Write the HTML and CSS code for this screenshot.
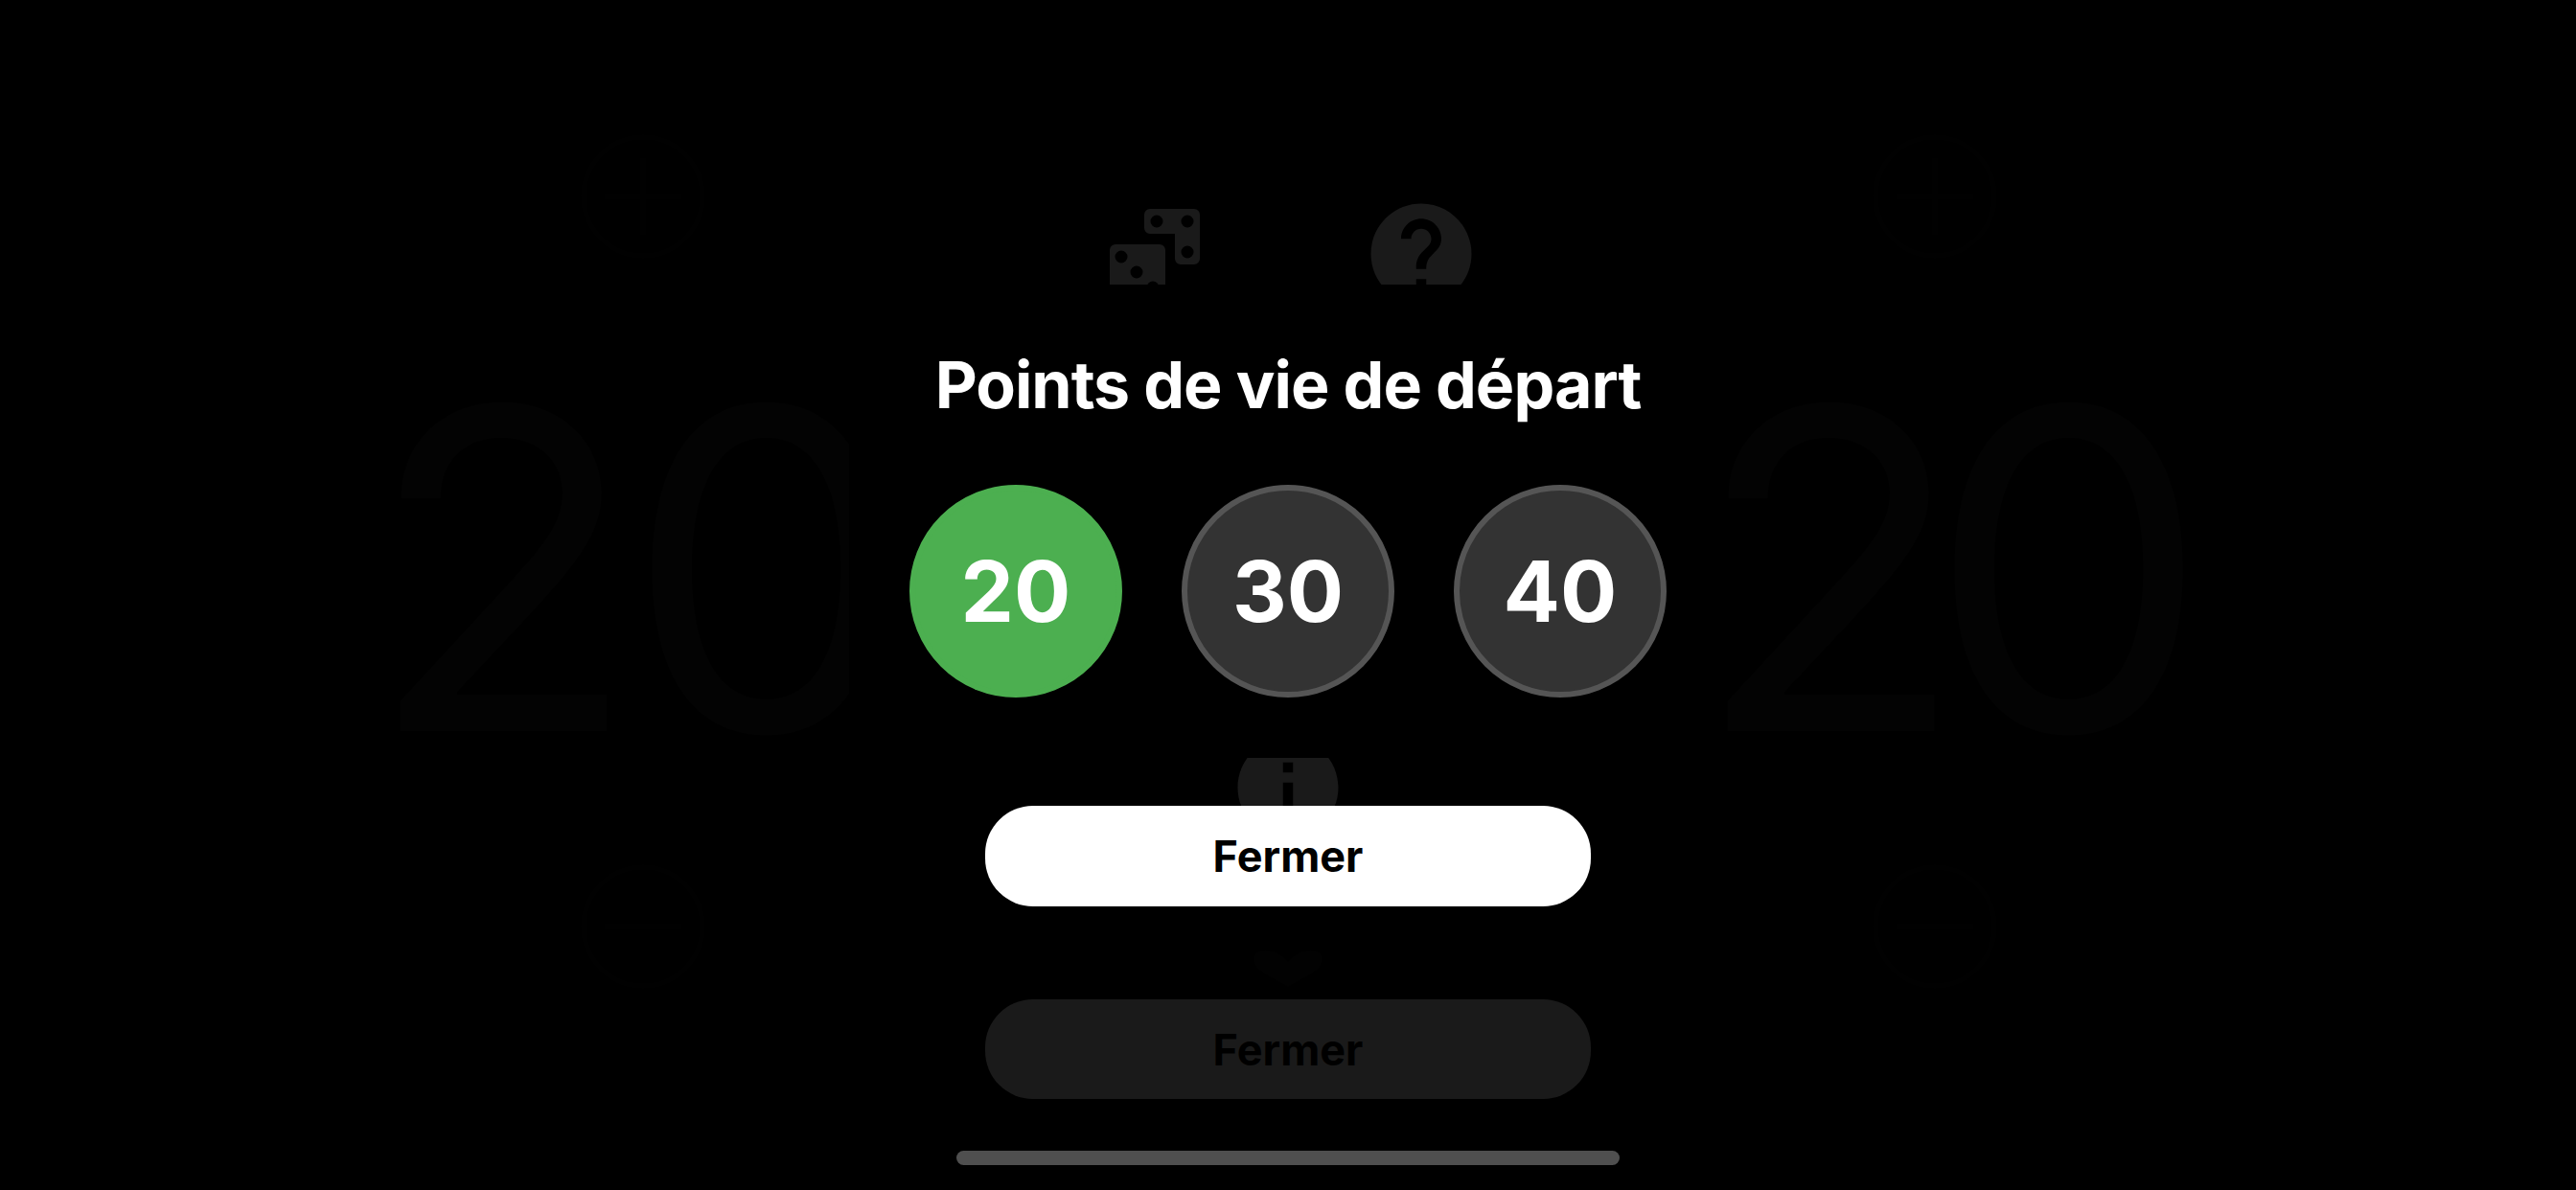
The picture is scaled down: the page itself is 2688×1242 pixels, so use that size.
FILE: index.html
```html
<!DOCTYPE html>
<html lang="fr">
<head>
<meta charset="utf-8">
<title>Points de vie de départ</title>
<link rel="stylesheet" href="styles.css">
</head>
<body>
<div class="screen">
  <div class="game">
    <section class="player player-start">
      <svg class="step" viewBox="0 0 130 130"><circle cx="65" cy="65" r="62"/><path d="M65 25v80M25 65h80"/></svg>
      <div class="life">20</div>
      <svg class="step step-minus" viewBox="0 0 130 130"><circle cx="65" cy="65" r="62"/><path d="M25 65h80"/></svg>
    </section>
    <section class="controls">
      <div class="tools">
        <svg class="icon" viewBox="0 0 126 126"><path fill-rule="evenodd" d="M58 16h46a6 6 0 0 1 6 6v46a6 6 0 0 1-6 6H90a6 6 0 0 1-6-6V42H58a6 6 0 0 1-6-6V22a6 6 0 0 1 6-6zM65 22.500a6.500 6.500 0 1 0 0 13a6.500 6.500 0 1 0 0-13zM97 22.500a6.500 6.500 0 1 0 0 13a6.500 6.500 0 1 0 0-13zM97 54.500a6.500 6.500 0 1 0 0 13a6.500 6.500 0 1 0 0-13z"/><path fill-rule="evenodd" d="M22 53h46a6 6 0 0 1 6 6v46a6 6 0 0 1-6 6H22a6 6 0 0 1-6-6V59a6 6 0 0 1 6-6zM28 59.500a6.500 6.500 0 1 0 0 13a6.500 6.500 0 1 0 0-13zM44 75.500a6.500 6.500 0 1 0 0 13a6.500 6.500 0 1 0 0-13zM61 91.500a6.500 6.500 0 1 0 0 13a6.500 6.500 0 1 0 0-13z"/></svg>
        <svg class="icon" viewBox="0 0 24 24"><path d="M12 2C6.480 2 2 6.480 2 12s4.480 10 10 10 10-4.480 10-10S17.520 2 12 2zm1 17h-2v-2h2v2zm2.070-7.750l-.9.920C13.450 12.900 13 13.500 13 15h-2v-.5c0-1.100.45-2.100 1.170-2.830l1.240-1.260c.37-.36.59-.86.59-1.410 0-1.100-.9-2-2-2s-2 .9-2 2H8c0-2.210 1.790-4 4-4s4 1.790 4 4c0 .88-.36 1.680-.93 2.250z"/></svg>
      </div>
      <svg class="icon info" viewBox="0 0 24 24"><path d="M12 2C6.480 2 2 6.480 2 12s4.480 10 10 10 10-4.480 10-10S17.520 2 12 2zm1 15h-2v-6h2v6zm0-8h-2V7h2v2z"/></svg>
      <svg class="heart" viewBox="0 0 76 42"><path d="M38 40C22 30 2 24 2 11C2 5 7 2 14 2c10 0 18 4 24 12C44 6 52 2 62 2c7 0 12 3 12 9C74 24 54 30 38 40z"/></svg>
      <div class="ghost-button">Fermer</div>
    </section>
    <section class="player player-end">
      <svg class="step" viewBox="0 0 130 130"><circle cx="65" cy="65" r="62"/><path d="M65 25v80M25 65h80"/></svg>
      <div class="life">20</div>
      <svg class="step step-minus" viewBox="0 0 130 130"><circle cx="65" cy="65" r="62"/><path d="M25 65h80"/></svg>
    </section>
  </div>

  <div class="overlay">
    <div class="panel">
      <h1 class="title">Points de vie de départ</h1>
      <div class="choices">
        <div class="choice choice-active">20</div>
        <div class="choice">30</div>
        <div class="choice">40</div>
      </div>
    </div>
    <div class="close-button">Fermer</div>
  </div>

  <div class="home-indicator"></div>
</div>
</body>
</html>
```

FILE: styles.css
```css
* {
  box-sizing: border-box;
}

html,
body {
  margin: 0;
  background: #000;
}

.screen {
  position: relative;
  width: 2688px;
  height: 1242px;
  overflow: hidden;
  background: #000;
  font-family: Inter, "Liberation Sans", sans-serif;
}

/* Dimmed game behind the dialog */
.game {
  display: flex;
  justify-content: center;
  height: 100%;
  padding: 0 275px;
}

.player {
  flex: 1;
  display: flex;
  flex-direction: column;
  align-items: center;
  padding-top: 140px;
}

.step {
  width: 130px;
  height: 130px;
  flex: none;
  fill: none;
  stroke: #010101;
  stroke-width: 6;
}

.player-start .step {
  margin-left: 38px;
}

.player-end .step {
  margin-right: 36px;
}

.step-minus {
  margin-top: 36px;
}

.life {
  height: 544px;
  margin-top: 52px;
  font-size: 466px;
  font-weight: 400;
  line-height: 544px;
  color: #030303;
}

.player-start .life {
  padding-left: 12px;
  letter-spacing: -14px;
}

.player-end .life {
  padding-right: 40px;
  letter-spacing: -40px;
}

.controls {
  width: 632px;
  flex: none;
  display: flex;
  flex-direction: column;
  align-items: center;
  padding-top: 202px;
}

.tools {
  display: flex;
  gap: 152px;
}

.icon {
  display: block;
  width: 126px;
  height: 126px;
  flex: none;
  fill: #1a1a1a;
}

.info {
  margin-top: 431px;
}

.heart {
  display: block;
  width: 76px;
  height: 42px;
  flex: none;
  margin-top: 105px;
  fill: #020202;
}

.ghost-button {
  width: 100%;
  height: 104px;
  margin-top: 11px;
  display: flex;
  align-items: center;
  justify-content: center;
  border-radius: 50px;
  background: #1a1a1a;
  color: #000;
  font-size: 45px;
  font-weight: 700;
}

/* Dialog */
.overlay {
  position: absolute;
  inset: 0;
  display: flex;
  flex-direction: column;
  align-items: center;
  padding-top: 297px;
}

.panel {
  width: 916px;
  height: 494px;
  display: flex;
  flex-direction: column;
  align-items: center;
  padding-top: 64px;
  background: #000;
}

.title {
  margin: 0;
  height: 145px;
  font-size: 68px;
  font-weight: 700;
  line-height: 80px;
  letter-spacing: -1px;
  color: #fff;
}

.choices {
  display: flex;
  gap: 62px;
}

.choice {
  width: 222px;
  height: 222px;
  display: flex;
  align-items: center;
  justify-content: center;
  border: 6px solid #555;
  border-radius: 50%;
  background: #333;
  color: #fff;
  font-size: 88px;
  font-weight: 700;
}

.choice-active {
  border-color: #4caf50;
  background: #4caf50;
}

.close-button {
  width: 632px;
  height: 105px;
  margin-top: 50px;
  display: flex;
  align-items: center;
  justify-content: center;
  border-radius: 50px;
  background: #fff;
  color: #000;
  font-size: 45px;
  font-weight: 700;
}

.home-indicator {
  position: absolute;
  left: 998px;
  bottom: 26px;
  width: 692px;
  height: 15px;
  border-radius: 8px;
  background: #4f4f4f;
}
```
